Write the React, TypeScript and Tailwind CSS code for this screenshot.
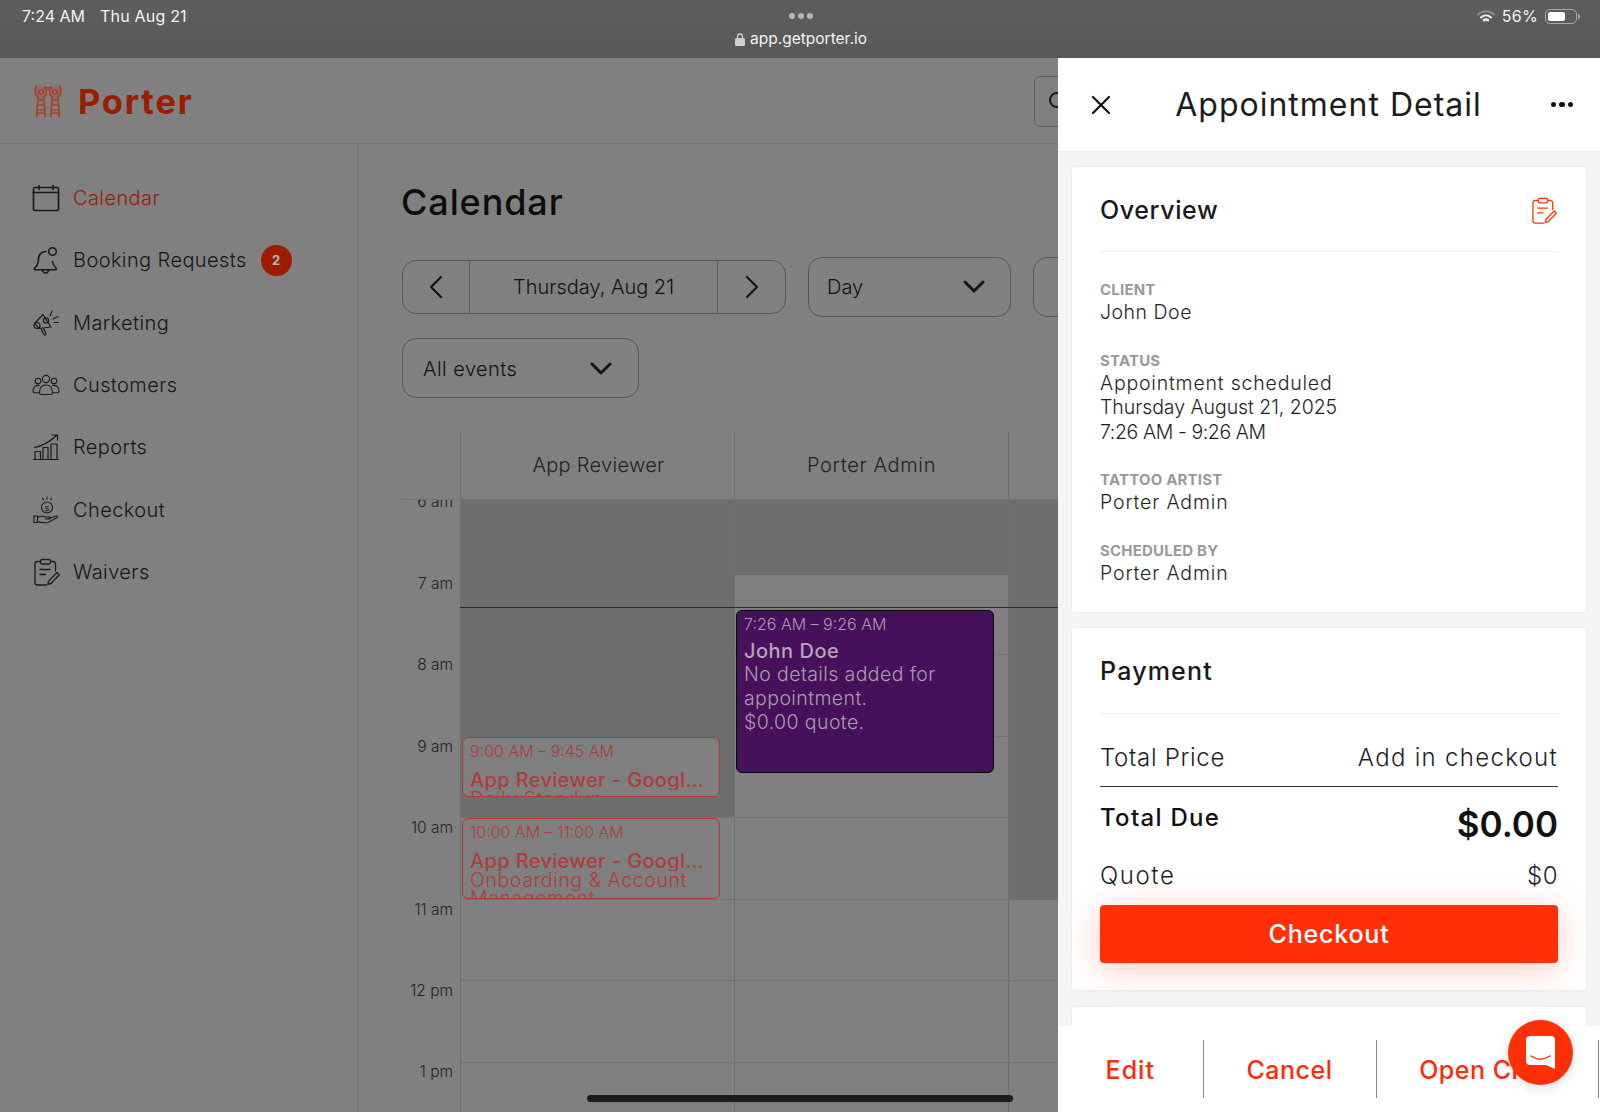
import React from "react";

const font = { fontFamily: '"Inter", "Liberation Sans", sans-serif' };

function Ic({ children, color = "#1a1a1a", w = 1.3, size = 28 }: { children: React.ReactNode; color?: string; w?: number; size?: number }) {
  return (
    <svg width={size} height={size} viewBox="0 0 28 28" fill="none" stroke={color} strokeWidth={w} strokeLinecap="round" strokeLinejoin="round" className="shrink-0">
      {children}
    </svg>
  );
}

const CalendarIcon = () => (
  <Ic w={1.7}>
    <rect x="1.500" y="3.500" width="25" height="23" rx="1.500" />
    <path d="M1.500 8.500h25M7 1.500v4M21 1.500v4" />
  </Ic>
);
const BellIcon = () => (
  <Ic w={1.6}>
    <path d="M14 5.500c-4.500 0-7.500 3.200-7.500 7.200 0 5-1.200 7.300-4 9.500-.6.600-.2 1.600.6 1.600h20.400c.8 0 1.200-1 .6-1.600-2-1.700-3.200-3.600-3.600-6.700" />
    <circle cx="20.500" cy="5.500" r="3.800" />
    <path d="M10.500 24.500c.5 1.800 1.800 2.500 3 2.500s2.500-.7 3-2.500" />
  </Ic>
);
const MegaphoneIcon = () => (
  <Ic w={1.2}>
    <path d="M11 5.500l8 12.500-12.500 1.500-3.500-5.500z" />
    <circle cx="5" cy="16.500" r="3" />
    <path d="M9 20l3 5.500c.6 1 2.600 0 2-1.300l-2.500-4.600" />
    <circle cx="14" cy="11.500" r="2.600" />
    <path d="M18 7l2-5M21 10l5-2.500M22 13.500h4.500" />
  </Ic>
);
const UsersIcon = () => (
  <Ic w={1.1}>
    <circle cx="14" cy="8" r="3.600" />
    <circle cx="6" cy="10" r="2.800" />
    <circle cx="22" cy="10" r="2.800" />
    <path d="M7.500 22c0-5 2.500-8 6.500-8s6.500 3 6.500 8c0 1-1 1.500-2 1.500H9.500c-1 0-2-.5-2-1.500z" />
    <path d="M7.500 14.500c-4-.8-6.500 2-6.500 5.500 0 1 .5 1.800 1.500 1.800h5M20.500 14.500c4-.8 6.500 2 6.500 5.500 0 1-.5 1.800-1.500 1.800h-5" />
  </Ic>
);
const ChartIcon = () => (
  <Ic w={1.2}>
    <path d="M1.500 26.500h25" />
    <rect x="3" y="18.500" width="5.500" height="8" />
    <rect x="11" y="14.500" width="5" height="12" />
    <rect x="19" y="11" width="6" height="15.500" />
    <path d="M2.500 14.500c8-1.500 15-5.500 22-12M20 2h5.500v5" />
  </Ic>
);
const CoinHandIcon = () => (
  <Ic w={1.1}>
    <circle cx="15" cy="11.500" r="5.500" />
    <path d="M15 1v2M10.500 2l.8 1.800M19.500 2l-.8 1.800" />
    <text x="15" y="14.500" textAnchor="middle" fontSize="8" fill="#1a1a1a" stroke="none" fontFamily="Liberation Sans">$</text>
    <rect x="2" y="20" width="3.500" height="6.500" />
    <path d="M5.500 21.500c3-2 5.500-1.500 8-.5h4c1.300 0 1.300 2-.3 2h-3.700M17 22.500l7-2.500c1.500-.3 2 1 .8 1.800L16 26.500c-3 .8-6.500 0-10.500-.8" />
  </Ic>
);
const WaiverIcon = ({ color = "#1a1a1a", size = 28 }: { color?: string; size?: number }) => (
  <Ic color={color} size={size} w={1.3}>
    <path d="M8.500 3.500H5.500A2.500 2.500 0 0 0 3 6v18.500A2.500 2.500 0 0 0 5.500 27h9M18.500 3.500h2.500A2.500 2.500 0 0 1 23.500 6v7" />
    <rect x="8.500" y="1.500" width="10" height="4.500" rx="1.500" />
    <path d="M8 11.500h10M8 16.500h5.500" />
    <path d="M25 14.500l2.300 2.300-8.300 8.700-3.200.8.800-3.200z" />
  </Ic>
);

const NAV = [
  { label: "Calendar", icon: <CalendarIcon />, active: true },
  { label: "Booking Requests", icon: <BellIcon />, badge: "2" },
  { label: "Marketing", icon: <MegaphoneIcon /> },
  { label: "Customers", icon: <UsersIcon /> },
  { label: "Reports", icon: <ChartIcon /> },
  { label: "Checkout", icon: <CoinHandIcon /> },
  { label: "Waivers", icon: <WaiverIcon /> },
];

const Chevron = ({ dir }: { dir: "l" | "r" }) => (
  <svg width="14" height="24" viewBox="0 0 14 24" fill="none" stroke="#141414" strokeWidth="2.200" strokeLinecap="round" strokeLinejoin="round">
    <path d={dir === "l" ? "M12 2 2 12l10 10" : "M2 2l10 10L2 22"} />
  </svg>
);
const Down = () => (
  <svg width="22" height="14" viewBox="0 0 22 14" fill="none" stroke="#141414" strokeWidth="3" strokeLinecap="round" strokeLinejoin="round">
    <path d="M2 2l9 9 9-9" />
  </svg>
);

function Logo() {
  const half = (
    <g stroke="#a8402c" strokeWidth="1.600" fill="none">
      <path d="M4 1C1 4 1 10 5 13v3h6v-3c3-2 3-6 0-10" fill="#a8402c" fillOpacity=".3" />
      <circle cx="8" cy="8" r="2.200" />
      <path d="M11 3c2 0 4 1 6 3" />
      <path d="M5 16l-1 10h8l-1-10M4.500 21h7M4 26v7M12 26v7M3 29h10" />
    </g>
  );
  return (
    <svg width="30" height="34" viewBox="0 0 30 34" className="shrink-0">
      {half}
      <g transform="translate(30,0) scale(-1,1)">{half}</g>
    </svg>
  );
}

const HOURS = ["7 am", "8 am", "9 am", "10 am", "11 am", "12 pm", "1 pm"];

function Column({ shade, children }: { shade: string; children?: React.ReactNode }) {
  return (
    <div className="relative w-[274px] shrink-0 border-l border-[#707070]">
      <div className="h-[73.500px] border-b border-[#727272]" />
      {[0, 1, 2, 3, 4, 5].map((i) => (
        <div key={i} className="h-[81.500px] border-b border-[#727272]">
          <div className="h-[41px] border-b border-[#7e7e7e]" />
        </div>
      ))}
      <div className={`absolute left-0 right-0 top-0 bg-[#6e6e6e] ${shade}`} />
      {children}
    </div>
  );
}

function Event({ cls, time, title, sub }: { cls: string; time: string; title: string; sub: string }) {
  return (
    <div className={`absolute left-[1px] w-[258px] overflow-hidden rounded-[6px] border border-[#b2393a] bg-[#7f7f7f] pl-[7px] pr-[10px] text-[#ad3d3d] ${cls}`}>
      <div className="mt-[2px] text-[16px] font-light leading-[22px]">{time}</div>
      <div className="mt-[8px] truncate text-[20px] font-medium leading-[20px] tracking-[0.35px]">{title}</div>
      <div className="text-[19.500px] font-light leading-[18px] tracking-[0.6px]">{sub}</div>
    </div>
  );
}

function Field({ label, lines, cls }: { label: string; lines: [string, string][]; cls?: string }) {
  return (
    <div className={cls}>
      <div className="text-[15px] font-bold leading-[20px] tracking-[0.2px] text-[#999]">{label}</div>
      {lines.map(([l, t]) => (
        <div key={l} className={`text-[19.500px] font-light leading-[24.500px] text-[#1f1f1f] ${t}`}>{l}</div>
      ))}
    </div>
  );
}

export default function App() {
  return (
    <div style={font} className="flex h-[1112px] w-[1600px] flex-col overflow-hidden">
      {/* iPad browser chrome */}
      <div className="grid h-[58px] shrink-0 grid-cols-3 bg-gradient-to-b from-[#5e5e5e] to-[#575757] pl-[22px] pr-[20px] pt-[5px] text-[16px] text-[#f4f4f4]">
        <div className="flex gap-[15px] leading-[22px]">
          <span>7:24 AM</span>
          <span className="tracking-[0.2px]">Thu Aug 21</span>
        </div>
        <div className="flex flex-col items-center">
          <div className="mt-[8px] flex gap-[3px]">
            <span className="h-[6px] w-[6px] rounded-full bg-[#b5b5b5]" />
            <span className="h-[6px] w-[6px] rounded-full bg-[#b5b5b5]" />
            <span className="h-[6px] w-[6px] rounded-full bg-[#b5b5b5]" />
          </div>
          <div className="mt-[9px] flex items-center gap-[5px] text-[15.500px] leading-[22px]">
            <svg width="10" height="13" viewBox="0 0 10 13" fill="#d0d0d0"><rect y="5" width="10" height="8" rx="1.500" /><path d="M2.500 5V3.500a2.500 2.500 0 0 1 5 0V5" fill="none" stroke="#d0d0d0" strokeWidth="1.300" /></svg>
            <span>app.getporter.io</span>
          </div>
        </div>
        <div className="flex items-start justify-end gap-[7px] leading-[22px]">
          <svg width="18" height="13" viewBox="0 0 18 13" className="mt-[5px]" fill="none" strokeLinecap="round">
            <path d="M1 4.500c4.500-4.300 11.500-4.300 16 0" stroke="#8c8c8c" strokeWidth="2" />
            <path d="M4 7.500c3-2.700 7-2.700 10 0" stroke="#f2f2f2" strokeWidth="2" />
            <path d="M7 10.300c1.200-1 2.800-1 4 0" stroke="#f2f2f2" strokeWidth="2.500" />
          </svg>
          <span className="tracking-[0.3px]">56%</span>
          <div className="mt-[4px] flex items-center">
            <div className="h-[15px] w-[32px] rounded-[5px] border border-[#a9a9a9] p-[2px]">
              <div className="h-full w-[17px] rounded-[2px] bg-white" />
            </div>
            <div className="ml-[1px] h-[5px] w-[2px] rounded-r bg-[#a9a9a9]" />
          </div>
        </div>
      </div>

      <div className="relative min-h-0 flex-1 bg-[#808080]">
        {/* Dimmed page */}
        <div className="flex h-[86px] w-[1058px] items-center overflow-hidden border-b border-[#737373] pl-[33px]">
          <Logo />
          <span className="ml-[15px] w-[160px] shrink-0 pt-[2px] text-[34.500px] font-bold tracking-[1.800px] text-[#9b1c02]">Porter</span>
          <div className="ml-[796px] mt-[2px] h-[51px] w-[60px] shrink-0 rounded-l-[6px] border border-[#5c5c5c] pl-[14px] pt-[15px]">
            <div className="h-[16px] w-[16px] rounded-full border-2 border-[#1a1a1a]" />
          </div>
        </div>
        <div className="flex h-[968px]">
          <aside className="w-[358px] shrink-0 border-r border-[#737373] pt-[23px]">
            {NAV.map((n) => (
              <div key={n.label} className="flex h-[62.300px] items-center pl-[32px]">
                {n.icon}
                <span className={`ml-[13px] text-[20px] font-light tracking-[0.4px] ${n.active ? "text-[#991c05]" : "text-[#161616]"}`}>{n.label}</span>
                {n.badge && (
                  <span className="ml-[14px] flex h-[31px] w-[31px] items-center justify-center rounded-full bg-[#9b1c02] text-[13px] font-bold text-[#b5b5b5]">{n.badge}</span>
                )}
              </div>
            ))}
          </aside>
          <main className="min-w-0 flex-1 overflow-hidden pl-[44px]">
            <h1 className="-ml-[1px] mt-[36px] text-[36px] font-medium leading-[44px] tracking-[0.9px] text-[#0d0d0d]">Calendar</h1>
            <div className="mt-[33px] flex items-center gap-[22px]">
              <div className="flex h-[54px] w-[384px] shrink-0 rounded-[14px] border border-[#555] text-[#111]">
                <div className="flex w-[67px] items-center justify-center border-r border-[#555]"><Chevron dir="l" /></div>
                <div className="flex flex-1 items-center justify-center text-[20px] font-light">Thursday, Aug 21</div>
                <div className="flex w-[68px] items-center justify-center border-l border-[#555]"><Chevron dir="r" /></div>
              </div>
              <div className="flex h-[60px] w-[203px] shrink-0 items-center justify-between rounded-[14px] border border-[#555] pl-[18px] pr-[25px] text-[20px] font-light text-[#111]">Day<Down /></div>
              <div className="h-[60px] w-[60px] shrink-0 rounded-l-[14px] border border-[#555]" />
            </div>
            <div className="mt-[21px] flex h-[60px] w-[237px] items-center justify-between rounded-[14px] border border-[#555] pl-[20px] pr-[26px] pt-[1px] text-[20px] font-light tracking-[0.45px] text-[#111]">All events<Down /></div>

            <div className="mt-[33px] flex h-[69px] w-[700px] border-b border-[#747474]">
              <div className="w-[58px] shrink-0" />
              <div className="flex w-[274px] shrink-0 items-center justify-center border-l border-[#707070] pl-[2px] text-[20px] font-light tracking-[0.3px] text-[#222]">App Reviewer</div>
              <div className="flex w-[274px] shrink-0 items-center justify-center border-l border-[#707070] text-[20px] font-light tracking-[0.65px] text-[#222]">Porter Admin</div>
              <div className="w-[92px] border-l border-[#707070]" />
            </div>
            <div className="relative flex">
              <div className="w-[58px] shrink-0 pr-[7px] text-right text-[15.500px] font-light leading-[18px] text-[#222]">
                <div className="h-[75px] overflow-hidden">
                  <div className="-mt-[7px]">6 am</div>
                </div>
                {HOURS.map((h) => (
                  <div key={h} className="h-[81.400px]">{h}</div>
                ))}
              </div>
              <Column shade="h-[317px]">
                <Event cls="top-[237px] h-[60px]" time="9:00 AM – 9:45 AM" title="App Reviewer - Google Calendar" sub="Daily Standup" />
                <Event cls="top-[318px] h-[81px]" time="10:00 AM – 11:00 AM" title="App Reviewer - Google Calendar" sub="Onboarding & Account Management" />
              </Column>
              <Column shade="h-[75px]">
                <div className="absolute left-[1px] top-[110px] h-[163px] w-[258px] rounded-[6px] border border-black bg-[#46105a] px-[7px] text-[#a99cae]">
                  <div className="mt-[2px] text-[16px] font-light leading-[22px]">7:26 AM – 9:26 AM</div>
                  <div className="mt-[5px] text-[20px] font-medium leading-[22px] tracking-[0.5px] text-[#b3a7b8]">John Doe</div>
                  <div className="text-[19.500px] font-light leading-[24px] tracking-[0.4px]">No details added for appointment.<br />$0.00 quote.</div>
                </div>
              </Column>
              <Column shade="h-[399px]" />
              <div className="pointer-events-none absolute left-[58px] right-0 top-[107px] h-[1px] bg-[#26360f]" />
            </div>
          </main>
        </div>

        {/* Detail panel */}
        <section className="absolute bottom-0 right-0 top-0 flex w-[542px] flex-col bg-[#f5f5f5]">
          <header className="grid h-[94px] shrink-0 grid-cols-[1fr_auto_1fr] items-center border-b border-[#eee] bg-white pl-[32px] pr-[27px]">
            <svg width="22" height="22" viewBox="0 0 22 22" stroke="#111" strokeWidth="2.200" strokeLinecap="round"><path d="M3 3l16 16M19 3 3 19" /></svg>
            <h2 className="mr-[6px] text-[32px] font-normal tracking-[1px] text-[#1c1c1c]">Appointment Detail</h2>
            <div className="flex justify-end gap-[3px]">
              <span className="h-[5.500px] w-[5.500px] rounded-full bg-[#111]" />
              <span className="h-[5.500px] w-[5.500px] rounded-full bg-[#111]" />
              <span className="h-[5.500px] w-[5.500px] rounded-full bg-[#111]" />
            </div>
          </header>
          <div className="min-h-0 flex-1 overflow-hidden px-[14px] pt-[15px]">
            <div className="h-[445px] rounded-[3px] bg-white px-[28px] shadow-[0_0_3px_rgba(0,0,0,0.08)]">
              <div className="flex h-[85px] items-center justify-between border-b border-[#eee] pt-[4px]">
                <h3 className="text-[25px] font-medium tracking-[0.6px] text-[#1a1a1a]">Overview</h3>
                <div className="mr-[1px] -mt-[2px]"><WaiverIcon color="#ff3008" size={27} /></div>
              </div>
              <Field cls="mt-[28px]" label="CLIENT" lines={[["John Doe", "tracking-[0.5px]"]]} />
              <Field cls="mt-[26px]" label="STATUS" lines={[["Appointment scheduled", "tracking-[0.8px]"], ["Thursday August 21, 2025", "tracking-[-0.05px]"], ["7:26 AM - 9:26 AM", "tracking-[-0.4px]"]]} />
              <Field cls="mt-[26px]" label="TATTOO ARTIST" lines={[["Porter Admin", "tracking-[0.85px]"]]} />
              <Field cls="mt-[26px]" label="SCHEDULED BY" lines={[["Porter Admin", "tracking-[0.85px]"]]} />
            </div>
            <div className="mt-[16px] h-[362px] rounded-[3px] bg-white px-[28px] shadow-[0_0_3px_rgba(0,0,0,0.08)]">
              <div className="flex h-[86px] items-center border-b border-[#eee] pt-[2px]">
                <h3 className="text-[25px] font-medium tracking-[1.2px] text-[#1a1a1a]">Payment</h3>
              </div>
              <div className="flex h-[73px] items-center justify-between border-b border-[#333] pt-[16px] text-[24px] font-light tracking-[0.7px] text-[#1f1f1f]">
                <span>Total Price</span>
                <span className="tracking-[1.3px]">Add in checkout</span>
              </div>
              <div className="flex h-[74px] items-center justify-between text-[#111]">
                <span className="mb-[12px] text-[24px] font-medium tracking-[1.3px]">Total Due</span>
                <span className="text-[35px] font-semibold leading-[40px] tracking-[0px]">$0.00</span>
              </div>
              <div className="flex h-[30px] items-center justify-between text-[24px] font-light tracking-[1.600px] text-[#1f1f1f]">
                <span>Quote</span>
                <span className="tracking-[0.5px]">$0</span>
              </div>
              <button className="mt-[14px] flex h-[58px] w-full items-center justify-center rounded-[4px] bg-[#ff3008] pt-[2px] text-[25px] font-medium tracking-[0.8px] text-white shadow-[0_6px_32px_rgba(255,48,8,0.25)]">Checkout</button>
            </div>
            <div className="mt-[17px] h-[200px] rounded-[3px] bg-white shadow-[0_0_3px_rgba(0,0,0,0.08)]" />
          </div>
          <footer className="flex h-[86px] shrink-0 items-center bg-white text-[25px] font-medium text-[#ff2a0a]">
            <div className="flex h-[58px] w-[145.500px] items-center justify-center border-r border-[#888] pt-[4px]"><span className="tracking-[1px]">Edit</span></div>
            <div className="flex h-[58px] w-[173px] items-center justify-center border-r border-[#888] pt-[4px]"><span className="tracking-[0.5px]">Cancel</span></div>
            <div className="flex h-[58px] w-[222.500px] items-center justify-center border-r border-[#888] pl-[6px] pt-[4px]"><span className="tracking-[0.5px]">Open Chart</span></div>
          </footer>
        </section>

        {/* Intercom launcher */}
        <div className="absolute left-[1508px] top-[962px] flex h-[65px] w-[65px] items-center justify-center rounded-full bg-[#ff3008] shadow-[0_2px_12px_rgba(0,0,0,0.15)]">
          <svg width="29" height="33" viewBox="0 0 29 33">
            <path d="M4 0h21a4 4 0 0 1 4 4v29l-9-4H4a4 4 0 0 1-4-4V4a4 4 0 0 1 4-4z" fill="#fff" />
            <path d="M5 20c6 4 13 4 19 0" fill="none" stroke="#ff3008" strokeWidth="1.500" strokeLinecap="round" />
          </svg>
        </div>
        {/* Home indicator */}
        <div className="absolute bottom-[10px] left-[587px] h-[7px] w-[426px] rounded-full bg-[#1c1c1c]" />
      </div>
    </div>
  );
}
